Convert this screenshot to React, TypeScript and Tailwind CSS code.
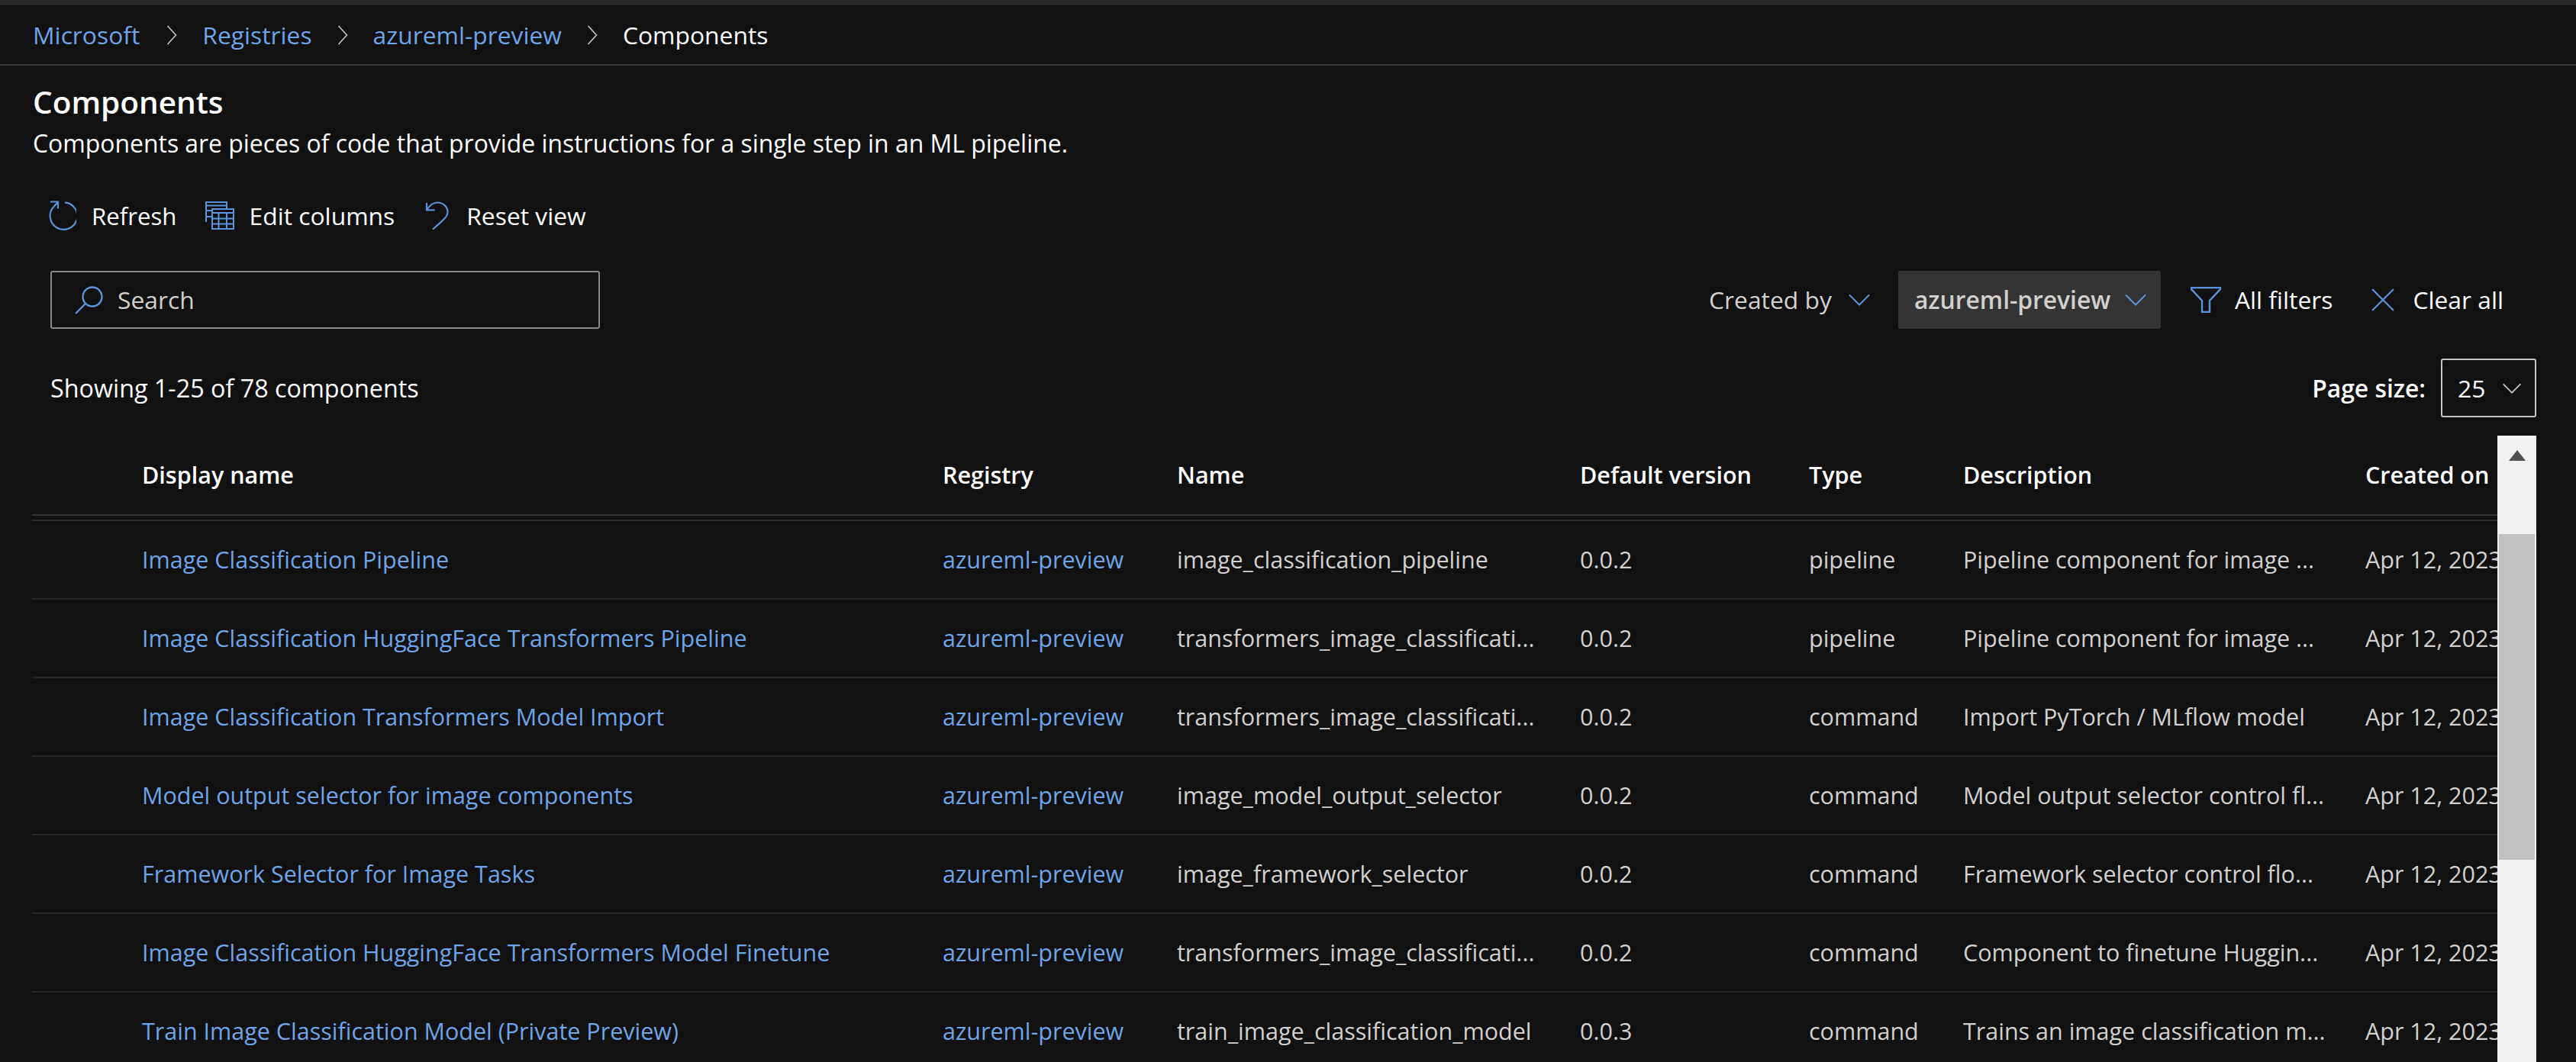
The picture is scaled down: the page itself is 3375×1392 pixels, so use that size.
const rows = [
  ["Image Classification Pipeline", "image_classification_pipeline", "0.0.2", "pipeline", "Pipeline component for image ..."],
  ["Image Classification HuggingFace Transformers Pipeline", "transformers_image_classificati...", "0.0.2", "pipeline", "Pipeline component for image ..."],
  ["Image Classification Transformers Model Import", "transformers_image_classificati...", "0.0.2", "command", "Import PyTorch / MLflow model"],
  ["Model output selector for image components", "image_model_output_selector", "0.0.2", "command", "Model output selector control fl..."],
  ["Framework Selector for Image Tasks", "image_framework_selector", "0.0.2", "command", "Framework selector control flo..."],
  ["Image Classification HuggingFace Transformers Model Finetune", "transformers_image_classificati...", "0.0.2", "command", "Component to finetune Huggin..."],
  ["Train Image Classification Model (Private Preview)", "train_image_classification_model", "0.0.3", "command", "Trains an image classification m..."],
];

const cols = "grid grid-cols-[144px_1049px_307px_528px_300px_202px_527px_200px] items-center";

const Chevron = ({ className = "w-[28px] h-[16px] text-[#5b92dc]" }: { className?: string }) => (
  <svg viewBox="0 0 28 16" className={className} fill="none" stroke="currentColor" strokeWidth="2">
    <path d="M1 1.5 14 14.5 27 1.5" />
  </svg>
);

const Crumb = ({ className = "" }: { className?: string }) => (
  <svg viewBox="0 0 14 26" className={`w-[14px] h-[26px] text-[#c8c6c4] ${className}`} fill="none" stroke="currentColor" strokeWidth="1.6">
    <path d="M1.5 1 12.5 13 1.5 25" />
  </svg>
);

export default function App() {
  return (
    <div className="h-[1392px] w-[3375px] overflow-hidden bg-[#111111] text-[31.8px] text-white font-['Open_Sans',sans-serif]">
      <div className="h-[7px] bg-[#2a2a2a]" />

      {/* Breadcrumb */}
      <div className="flex h-[79px] items-center gap-[33px] border-b-2 border-[#3a3a3a] pl-[43px]">
        <span className="text-[#6ea4e8]">Microsoft</span>
        <Crumb className="ml-[2px]" />
        <span className="text-[#6ea4e8]">Registries</span>
        <Crumb />
        <span className="text-[#6ea4e8]">azureml-preview</span>
        <Crumb />
        <span>Components</span>
      </div>

      {/* Title */}
      <div className="h-[150px] pl-[43px] pt-[22px]">
        <h1 className="h-[52px] text-[40.5px] leading-[52px] font-semibold">Components</h1>
        <p className="mt-[3px] text-[31.9px] leading-[50px]">Components are pieces of code that provide instructions for a single step in an ML pipeline.</p>
      </div>

      {/* Command bar */}
      <div className="flex h-[96px] items-center pl-[60px] pb-[2px]">
        <svg viewBox="5 7 40 40" className="w-[40px] h-[40px] text-[#5b92dc]" fill="none" stroke="currentColor" strokeWidth="2.2">
          <path d="M30 9.300A17.800 17.800 0 1 1 15.800 14.500L21 8.800" />
          <path d="M11 8.500h10v9" />
        </svg>
        <span className="ml-[20px] text-[31.2px]">Refresh</span>
        <svg viewBox="6 7 40 40" className="ml-[36px] w-[40px] h-[40px] text-[#5b92dc]" fill="none" stroke="currentColor" strokeWidth="2">
          <path d="M8 35V9h27v8M8 13.500h27M8 20h7M8 28h7" />
          <path d="M16 18h28v26H16zM16 23h28M16 30.500h28M16 37.500h28M24.500 23v21M35 23v21" />
        </svg>
        <span className="ml-[19px]">Edit columns</span>
        <svg viewBox="10 7 34 40" className="ml-[38px] w-[34px] h-[40px] text-[#5b92dc]" fill="none" stroke="currentColor" strokeWidth="2.2">
          <path d="M14 10v9.300h10.500" />
          <path d="M14 19.300C18 13 23 9.500 28 9.500c7.500 0 13.500 5.500 13.500 12.500 0 5-3.500 9-19.500 22.500" />
        </svg>
        <span className="ml-[22px]">Reset view</span>
      </div>

      {/* Search and filters */}
      <div className="mt-[23px] flex h-[76px] items-center pl-[66px] pr-[95px]">
        <div className="flex h-full w-[720px] items-center rounded-[3px] border-2 border-[#8a8886] pl-[30px] text-[#d2d0ce]">
          <svg viewBox="0 0 38 38" className="w-[38px] h-[38px] text-[#5b92dc]" fill="none" stroke="currentColor" strokeWidth="2.4">
            <circle cx="23" cy="15" r="12.500" />
            <path d="M14 24 1 37" />
          </svg>
          <span className="ml-[18px]">Search</span>
        </div>
        <span className="ml-auto text-[#d2d0ce]">Created by</span>
        <Chevron className="ml-[22px] w-[28px] h-[16px] text-[#5b92dc]" />
        <div className="ml-[37px] flex h-full w-[344px] items-center rounded-[3px] bg-[#343434] pl-[21px] font-semibold text-[#d2d0ce]">
          azureml-preview
          <Chevron className="ml-[19px] w-[28px] h-[16px] text-[#5b92dc]" />
        </div>
        <svg viewBox="0 0 40 34" className="ml-[39px] w-[40px] h-[34px] text-[#5b92dc]" fill="none" stroke="currentColor" strokeWidth="2.4">
          <path d="M1 1h38v2L25 18v15H15V18L1 3z" />
        </svg>
        <span className="ml-[18px]">All filters</span>
        <svg viewBox="0 0 30 30" className="ml-[51px] w-[30px] h-[30px] text-[#5b92dc]" fill="none" stroke="currentColor" strokeWidth="2.2">
          <path d="M1 1l28 28M29 1 1 29" />
        </svg>
        <span className="ml-[24px]">Clear all</span>
      </div>

      {/* Count and page size */}
      <div className="flex items-center pl-[66px] pr-[52px] pt-[39px] pb-[24px]">
        <span className="text-[32.3px]">Showing 1-25 of 78 components</span>
        <span className="ml-auto font-semibold">Page size:</span>
        <div className="ml-[20px] flex h-[77px] w-[125px] items-center rounded-[3px] border-2 border-[#c8c6c4] pl-[20px]">
          25
          <Chevron className="ml-[21px] w-[28px] h-[14px] text-[#c8c6c4]" />
        </div>
      </div>

      {/* Table with scrollbar */}
      <div className="flex pl-[42px] pr-[52px] text-[30.5px]">
        <div className="min-w-0 flex-1 overflow-hidden">
          <div className={`${cols} h-[105px] w-[3300px] border-b-2 border-[#333333] font-semibold`}>
            <span />
            <span>Display name</span>
            <span>Registry</span>
            <span>Name</span>
            <span>Default version</span>
            <span>Type</span>
            <span>Description</span>
            <span>Created on</span>
          </div>
          <div className="mt-[5px] h-[2px] bg-[#2a2a2a]" />
          {rows.map((row) => (
            <div key={row[0]} className={`${cols} h-[103px] w-[3300px] border-b-2 border-[#262626] pt-[1px] text-[#d2d0ce]`}>
              <span />
              <span className="text-[#6ea4e8]">{row[0]}</span>
              <span className="text-[#6ea4e8]">azureml-preview</span>
              <span className="whitespace-nowrap">{row[1]}</span>
              <span>{row[2]}</span>
              <span>{row[3]}</span>
              <span className="whitespace-nowrap">{row[4]}</span>
              <span className="whitespace-nowrap">Apr 12, 2023</span>
            </div>
          ))}
        </div>

        <div className="h-[821px] w-[51px] shrink-0 bg-[#f1f1f1] pt-[19px]">
          <div className="mx-auto h-0 w-0 border-x-[11px] border-b-[14px] border-x-transparent border-b-[#505050]" />
          <div className="mx-auto mt-[96px] h-[427px] w-[47px] bg-[#c1c1c1]" />
        </div>
      </div>
    </div>
  );
}
